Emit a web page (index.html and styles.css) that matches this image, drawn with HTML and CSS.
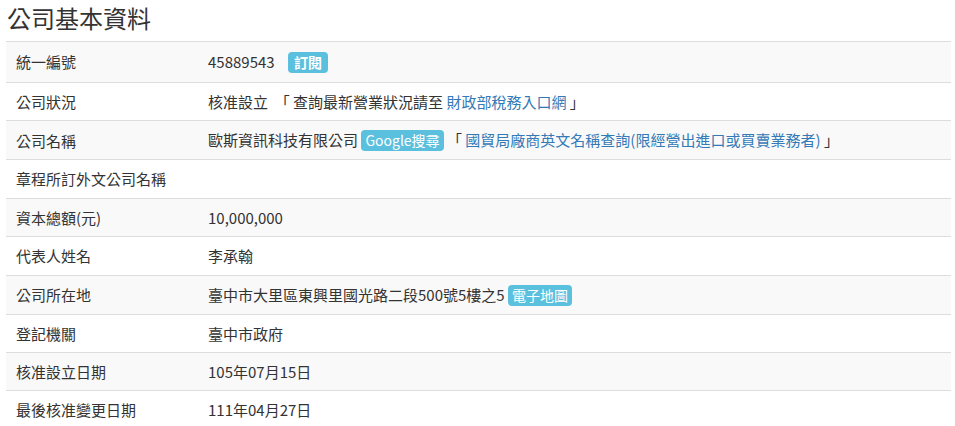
FILE: index.html
```html
<!DOCTYPE html>
<html lang="zh-Hant">
<head>
<meta charset="utf-8">
<link rel="stylesheet" href="styles.css">
</head>
<body>
<div class="page">
  <h1 class="title">公司基本資料</h1>
  <table class="info">
    <tbody>
      <tr><td class="label">統一編號</td><td class="value">45889543 <span class="badge bold">訂閱</span></td></tr>
      <tr><td class="label">公司狀況</td><td class="value">核准設立 &nbsp;「 查詢最新營業狀況請至 <a class="link">財政部稅務入口網</a> 」</td></tr>
      <tr><td class="label">公司名稱</td><td class="value">歐斯資訊科技有限公司 <span class="badge">Google搜尋</span> 「 <a class="link">國貿局廠商英文名稱查詢(限經營出進口或買賣業務者)</a> 」</td></tr>
      <tr><td class="label">章程所訂外文公司名稱</td><td class="value"></td></tr>
      <tr><td class="label">資本總額(元)</td><td class="value">10,000,000</td></tr>
      <tr><td class="label">代表人姓名</td><td class="value">李承翰</td></tr>
      <tr><td class="label">公司所在地</td><td class="value">臺中市大里區東興里國光路二段500號5樓之5 <span class="badge">電子地圖</span></td></tr>
      <tr><td class="label">登記機關</td><td class="value">臺中市政府</td></tr>
      <tr><td class="label">核准設立日期</td><td class="value">105年07月15日</td></tr>
      <tr><td class="label">最後核准變更日期</td><td class="value">111年04月27日</td></tr>
    </tbody>
  </table>
</div>
</body>
</html>
```
FILE: styles.css
```css
html, body {
  margin: 0;
  padding: 0;
  background: #fff;
}
body {
  font-family: "Noto Sans CJK TC", "Noto Sans", sans-serif;
  color: #333;
  font-size: 15px;
}
.page {
  padding: 0 4px 0 6px;
}
.title {
  margin: 0;
  padding: 2px 0 0 1px;
  height: 41px;
  box-sizing: border-box;
  font-size: 24px;
  font-weight: normal;
  line-height: 32px;
  color: #333;
}
.info {
  width: 100%;
  border-collapse: collapse;
  border-spacing: 0;
}
.info td {
  border-top: 1px solid #ddd;
  padding: 8px 10px;
  line-height: 21.4px;
  vertical-align: middle;
  white-space: nowrap;
}
.info tr:nth-child(odd) td {
  background: #f9f9f9;
}
.info tr:first-child td {
  line-height: 24px;
}
.label {
  width: 172px;
}
.link {
  color: #337ab7;
  text-decoration: none;
}
.badge {
  display: inline-block;
  background: #5bc0de;
  color: #fff;
  border-radius: 4px;
  padding: 1px 4px;
  line-height: 19px;
  font-size: 14px;
  vertical-align: baseline;
}
.badge.bold {
  font-weight: bold;
  padding: 1px 6px;
  margin-left: 10px;
}
```
